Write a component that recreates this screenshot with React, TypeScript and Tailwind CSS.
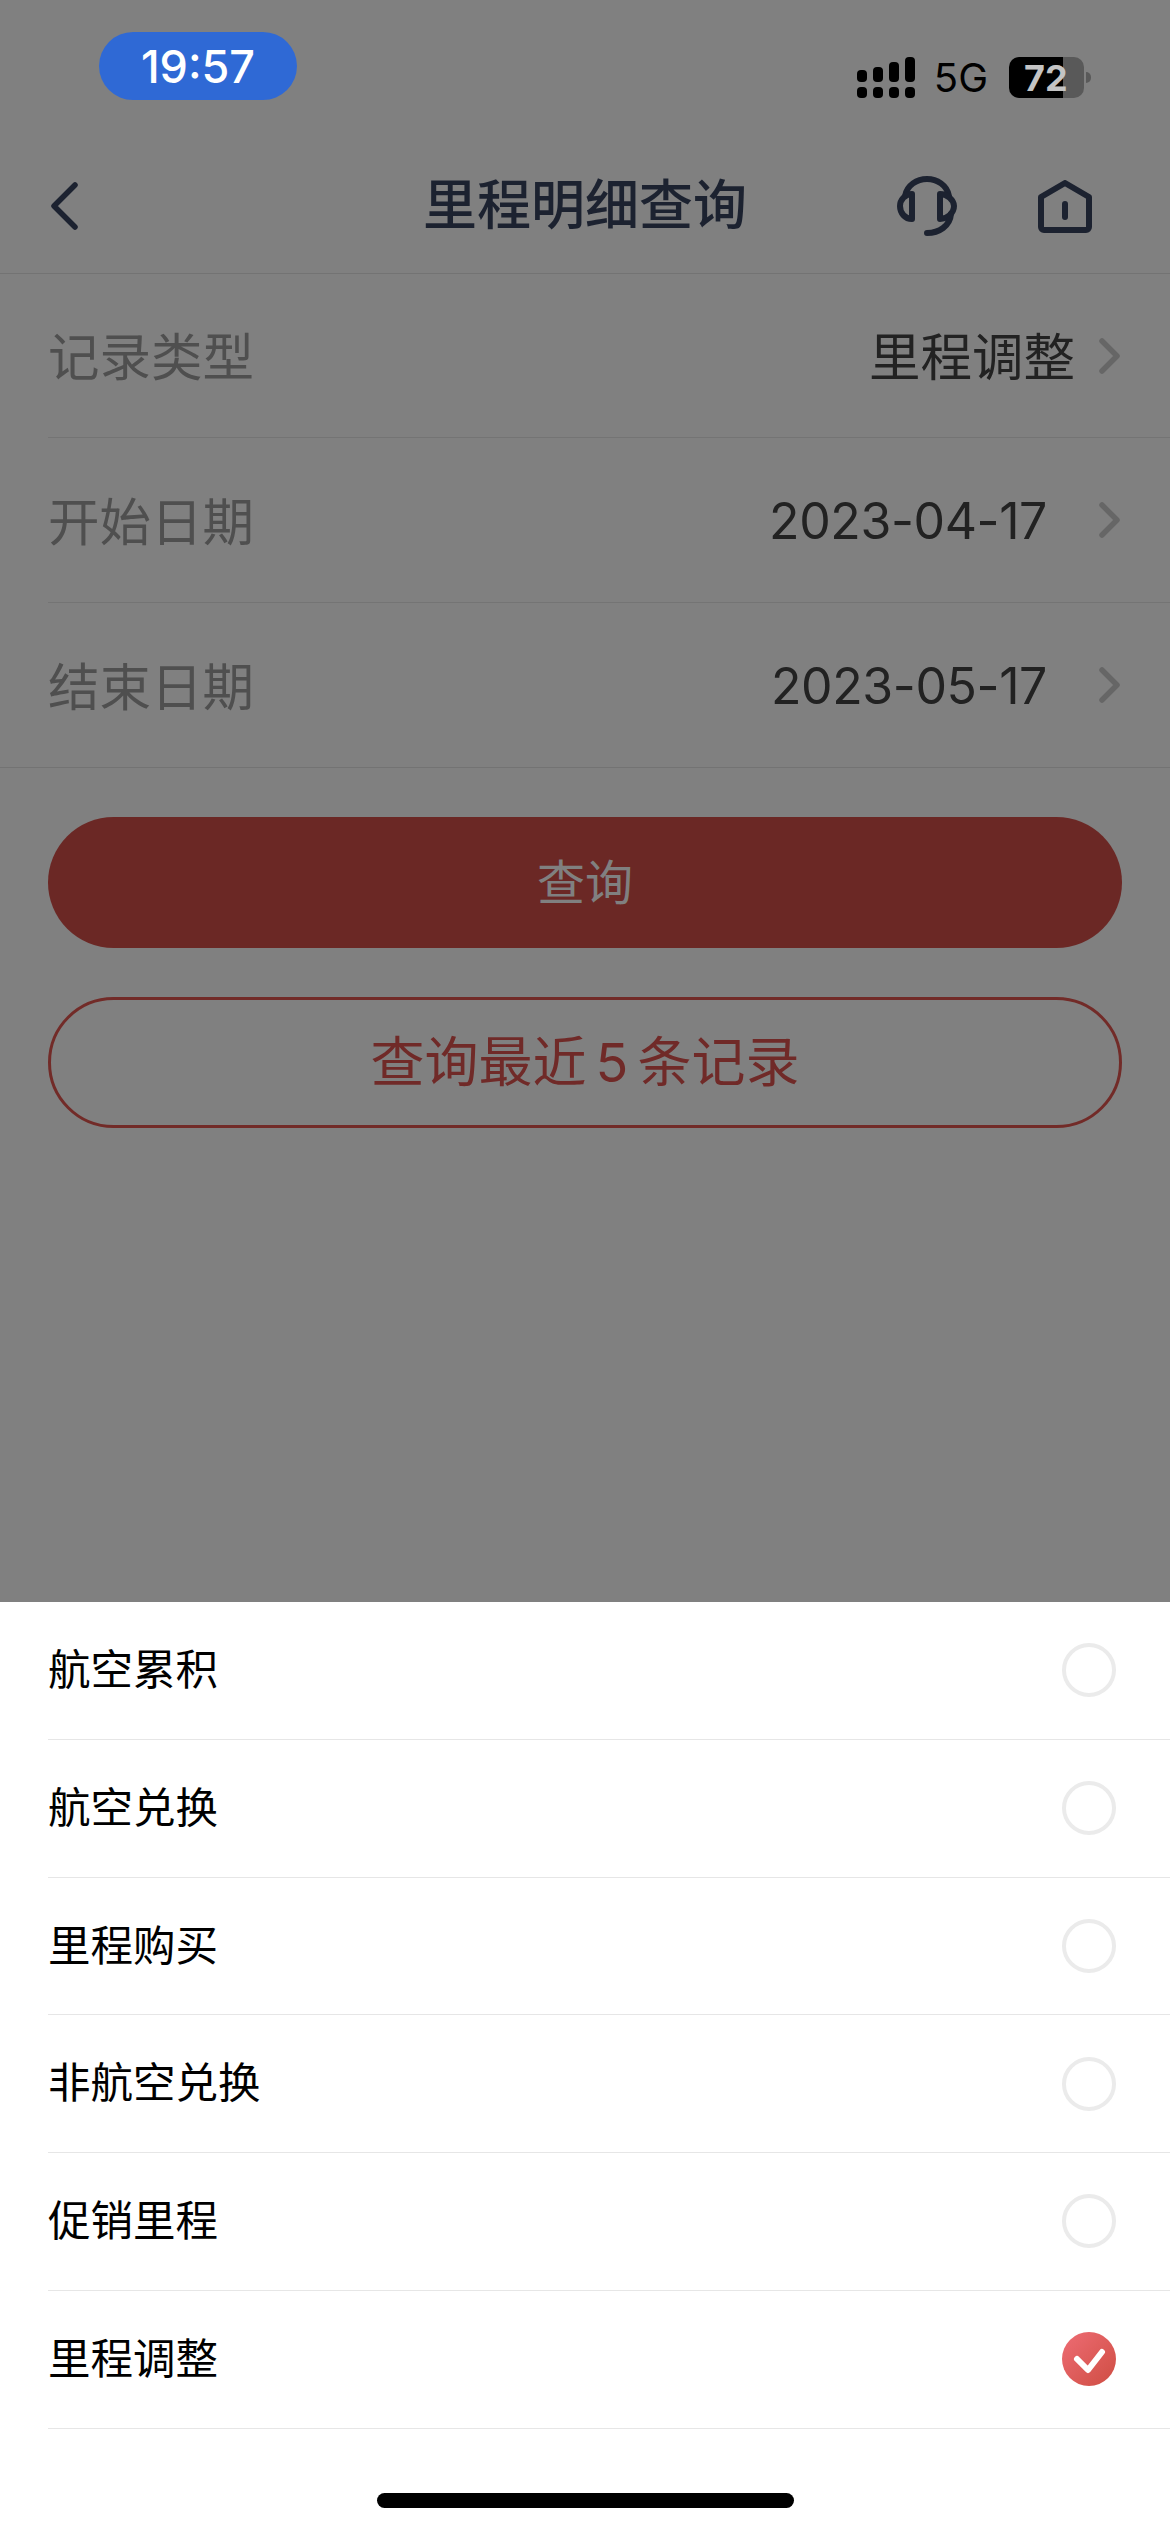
import React from 'react';

const FILTER_ROWS = [
  { label: '记录类型', value: '里程调整', cjk: true },
  { label: '开始日期', value: '2023-04-17', cjk: false },
  { label: '结束日期', value: '2023-05-17', cjk: false },
];

const RECORD_TYPES = ['航空累积', '航空兑换', '里程购买', '非航空兑换', '促销里程', '里程调整'];
const SELECTED_TYPE = '里程调整';

const SignalIcon = () => (
  <svg width="58" height="41" viewBox="0 0 58 41" fill="#000">
    <rect x="0" y="13" width="10" height="12" rx="4" />
    <rect x="16" y="10" width="10" height="15" rx="4" />
    <rect x="32" y="5" width="10" height="20" rx="4" />
    <rect x="48" y="0" width="10" height="25" rx="4" />
    <rect x="0" y="30" width="10" height="11" rx="4" />
    <rect x="16" y="30" width="10" height="11" rx="4" />
    <rect x="32" y="30" width="10" height="11" rx="4" />
    <rect x="48" y="30" width="10" height="11" rx="4" />
  </svg>
);

const BackIcon = () => (
  <svg width="27" height="48" viewBox="0 0 27 48" fill="none" stroke="#1c2230" strokeWidth="5.5" strokeLinecap="round" strokeLinejoin="round">
    <path d="M24 3 L3 24 L24 45" />
  </svg>
);

const HeadsetIcon = () => (
  <svg width="60" height="60" viewBox="0 0 60 60" fill="none" stroke="#1c2230" strokeWidth="6" strokeLinecap="round" strokeLinejoin="round">
    <path d="M8 20 C10 9 20 3 30 3 C40 3 50 9 52 20" />
    <path d="M15 18 V43 C8 43 3 37 3 30 C3 24 8 18 15 18 Z" />
    <path d="M43 18 V43 C50 43 57 37 57 30 C57 24 50 18 43 18 Z" />
    <path d="M54 38 C53 50 42 57 30 57" />
  </svg>
);

const HomeIcon = () => (
  <svg width="54" height="53" viewBox="0 0 54 53" fill="none" stroke="#1c2230" strokeWidth="6" strokeLinecap="round" strokeLinejoin="round">
    <path d="M27 3 L3 17 V47 A3 3 0 0 0 6 50 H48 A3 3 0 0 0 51 47 V17 Z" />
    <path d="M27 24 V37" />
  </svg>
);

const ChevronIcon = () => (
  <svg width="21" height="36" viewBox="0 0 21 36" fill="none" stroke="#666666" strokeWidth="5.5" strokeLinecap="round" strokeLinejoin="round">
    <path d="M3 3 L18 18 L3 33" />
  </svg>
);

const App: React.FC = () => {
  return (
    <div className="flex flex-col h-[2532px] w-[1170px] overflow-hidden bg-[#808080] font-['Inter','Noto_Sans_CJK_SC',sans-serif]">
      <div className="flex justify-between h-[120px] pl-[99px] pr-[79px]">
        <div className="flex items-center justify-center mt-[32px] w-[198px] h-[68px] rounded-[34px] bg-[#2f69d5] text-[45px] leading-none font-medium text-white">
          19:57
        </div>
        <div className="flex items-center mt-[57px] h-[41px]">
          <SignalIcon />
          <span className="ml-[19px] text-[40px] leading-none text-black">5G</span>
          <div className="flex items-center ml-[21px] pl-[15px] w-[75px] h-[41px] rounded-[10px] bg-[linear-gradient(to_right,#000_54px,#595959_54px)] text-[36px] leading-none font-bold text-[#c4c4c4]">
            72
          </div>
          <div className="ml-[2px] w-[5px] h-[11px] rounded-r-full bg-[#595959]" />
        </div>
      </div>

      <div className="grid grid-cols-[minmax(0,1fr)_auto_minmax(0,1fr)] items-center h-[154px] pt-[19px] px-[51px] border-b border-[#737373]">
        <BackIcon />
        <div className="text-[54px] leading-none font-medium text-[#1c2230]">里程明细查询</div>
        <div className="flex items-center justify-end gap-[81px] pr-[27px]">
          <HeadsetIcon />
          <HomeIcon />
        </div>
      </div>

      <div className="border-b border-[#737373]">
        {FILTER_ROWS.map((row, i) => (
          <div
            key={row.label}
            className={`flex items-center justify-between h-[164.33px] ml-[48px] pr-[50px] ${i < 2 ? 'border-b border-[#747474]' : ''}`}
          >
            <span className="pt-[5px] text-[51.5px] leading-none text-[#4f4f4f]">{row.label}</span>
            <div className="flex items-center">
              <span className={`text-[#222222] leading-none ${row.cjk ? 'pt-[5px] text-[51.5px] mr-[24px]' : 'pt-[3px] text-[50px] tracking-[-0.4px] mr-[52px]'}`}>
                {row.value}
              </span>
              <ChevronIcon />
            </div>
          </div>
        ))}
      </div>

      <div className="flex flex-col gap-[49px] mt-[49px] mx-[48px]">
        <div className="flex items-center justify-center h-[131px] pt-[2px] rounded-full bg-[#6b2825] text-[48px] leading-none text-[#808080]">
          查询
        </div>
        <div className="flex items-center justify-center h-[131px] pt-[2px] rounded-full border-[3px] border-[#722b28] text-[54px] leading-none text-[#702a28]">
          查询最近<span className="mx-[9px]">5</span>条记录
        </div>
      </div>

      <div className="mt-auto h-[930px] bg-white">
        {RECORD_TYPES.map((type) => (
          <div key={type} className="flex items-center justify-between h-[137.75px] ml-[48px] pr-[54px] border-b border-[#e6e6e6]">
            <span className="text-[42.5px] leading-none text-black">{type}</span>
            {type === SELECTED_TYPE ? (
              <div className="flex items-center justify-center w-[54px] h-[54px] rounded-full bg-linear-to-br from-[#ee6c74] to-[#cf4d42]">
                <svg width="54" height="54" viewBox="0 0 54 54" fill="none" stroke="#ffffff" strokeWidth="6" strokeLinecap="round" strokeLinejoin="round">
                  <path d="M15 27 L26 38 L40 20" />
                </svg>
              </div>
            ) : (
              <div className="w-[54px] h-[54px] rounded-full border-[4.5px] border-[#ebebeb]" />
            )}
          </div>
        ))}
        <div className="mx-auto mt-[64px] w-[417px] h-[15px] rounded-full bg-black" />
      </div>
    </div>
  );
};

export default App;
